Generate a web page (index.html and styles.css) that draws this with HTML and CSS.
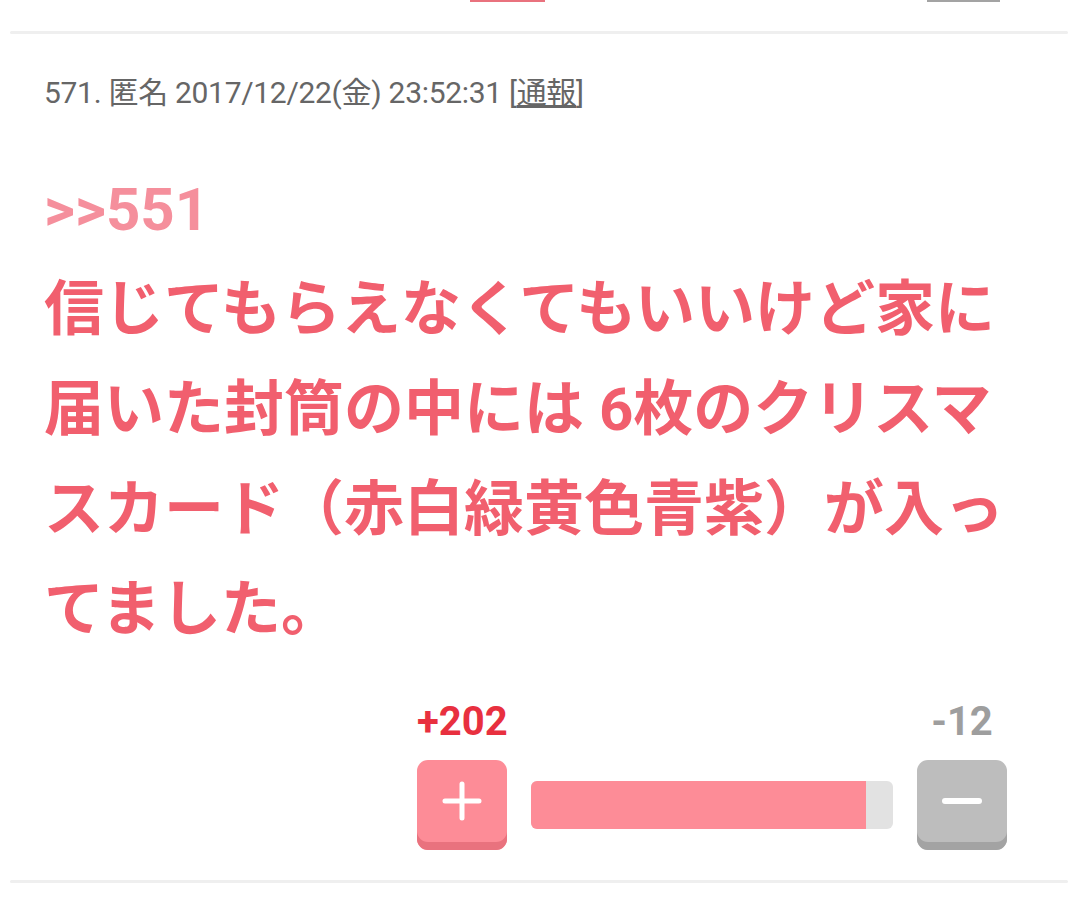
FILE: index.html
```html
<!DOCTYPE html>
<html lang="ja">
  <head>
    <meta charset="UTF-8" />
    <meta name="viewport" content="width=device-width, initial-scale=1.0" />
    <title>571. 匿名</title>
    <link rel="stylesheet" href="styles.css">
  </head>
  <body>
    <!-- tail of the previous comment -->
    <div class="prev-tail">
      <span class="sliver sliver-plus"></span>
      <span class="sliver sliver-minus"></span>
    </div>
    <div class="divider"></div>

    <article class="post">
      <p class="meta">571. 匿名 2017/12/22(金) 23:52:31 [<a href="#" class="report">通報</a>]</p>
      <div class="body">
        <a href="#" class="anchor">&gt;&gt;551</a><br>
        信じてもらえなくてもいいけど家に届いた封筒の中には 6枚のクリスマスカード（赤白緑黄色青紫）が入ってました。
      </div>

      <div class="votes">
        <div class="counts">
          <span class="count count-plus">+202</span>
          <span class="count count-minus">-12</span>
        </div>
        <div class="vote-row">
          <button class="vote-btn vote-plus" aria-label="plus">
            <svg width="40" height="40" viewBox="0 0 40 40">
              <path d="M20 3v34M3 20h34" stroke="#fff" stroke-width="5" stroke-linecap="round"/>
            </svg>
          </button>
          <div class="bar"><div class="bar-fill" style="width: 92.5%"></div></div>
          <button class="vote-btn vote-minus" aria-label="minus">
            <svg width="40" height="40" viewBox="0 0 40 40">
              <path d="M3 20h34" stroke="#fff" stroke-width="6" stroke-linecap="round"/>
            </svg>
          </button>
        </div>
      </div>
    </article>
    <div class="divider"></div>
  </body>
</html>
```

FILE: styles.css
```css
:root {
  --pink: #fd8c97;
  --pink-dark: #e9727e;
  --text-pink: #f15f6e;
  --anchor-pink: #f58f9c;
  --red: #e8303f;
  --gray-btn: #bdbdbd;
  --gray-btn-dark: #a3a3a3;
}
* { box-sizing: border-box; }
body {
  margin: 0;
  background: #fff;
  font-family: Roboto, "Noto Sans CJK JP", sans-serif;
  color: #666;
}
.prev-tail { height: 31px; display: flex; align-items: flex-start; }
.sliver { display: block; height: 2px; }
.sliver-plus { width: 75px; margin-left: 470px; background: var(--pink-dark); }
.sliver-minus { width: 73px; margin-left: 382px; background: var(--gray-btn-dark); }
.divider { height: 3px; margin: 0 12px 0 10px; background: #efefef; border-radius: 2px; }

.post { padding: 39px 0 30px 44px; }
.meta { margin: 0; font-size: 30px; line-height: 40px; color: #666; letter-spacing: -0.3px; }
.report { color: #666; text-decoration: underline; }

.body {
  width: 960px;
  margin-top: 47px;
  font-size: 60px;
  line-height: 100px;
  font-weight: 700;
  color: var(--text-pink);
}
.anchor { color: var(--anchor-pink); text-decoration: none; }

.votes { width: 590px; margin: 37px 0 0 373px; }
.counts { display: flex; justify-content: space-between; }
.count { width: 90px; text-align: center; font-size: 40px; line-height: 50px; font-weight: 700; white-space: nowrap; }
.count-plus { color: var(--red); }
.count-minus { color: #9e9e9e; }

.vote-row { display: flex; align-items: center; gap: 24px; margin-top: 13px; }
.vote-btn {
  appearance: none;
  border: none;
  width: 90px;
  height: 90px;
  flex: none;
  border-radius: 11px;
  padding: 0 0 8px;
  display: flex;
  align-items: center;
  justify-content: center;
  cursor: pointer;
}
.vote-plus { background: var(--pink); box-shadow: inset 0 -8px 0 var(--pink-dark); }
.vote-minus { background: var(--gray-btn); box-shadow: inset 0 -8px 0 var(--gray-btn-dark); }
.bar { flex: 1; height: 48px; background: #e2e2e2; border-radius: 6px; overflow: hidden; }
.bar-fill { height: 100%; background: var(--pink); }
```
